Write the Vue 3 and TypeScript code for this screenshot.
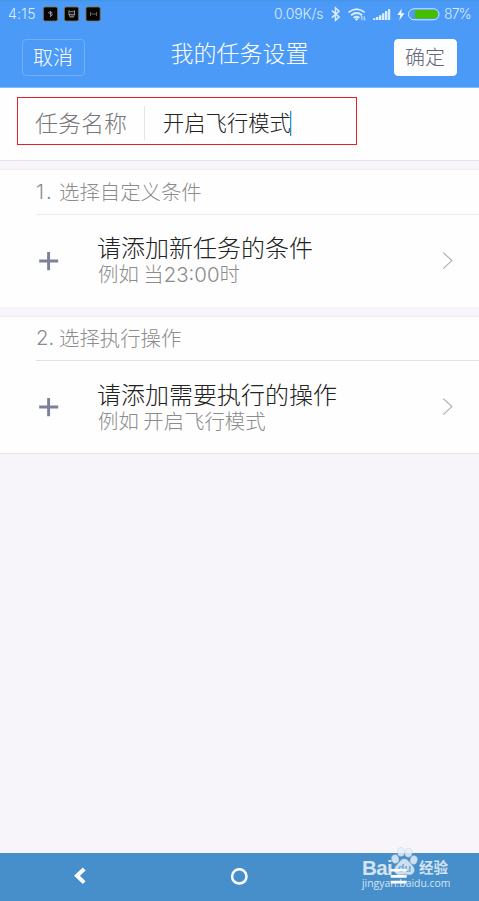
<script setup lang="ts">
interface Section {
  heading: string
  title: string
  before: string
  example: string
  after: string
}

const taskName = '开启飞行模式'
const sections: Section[] = [
  { heading: '选择自定义条件', title: '请添加新任务的条件', before: '例如 当', example: '23:00', after: '时' },
  { heading: '选择执行操作', title: '请添加需要执行的操作', before: '例如 开启飞行模式', example: '', after: '' },
]
</script>

<template>
  <div class="screen">
    <header class="top">
      <div class="status">
        <span class="clock">4:15</span>
        <svg class="apps" width="60" height="16" viewBox="0 0 60 16">
          <g fill="#050505" stroke="#8a7440" stroke-width="0.8">
            <rect x="1.4" y="1" width="14.2" height="14" rx="1.8" />
            <rect x="22.4" y="1" width="14.2" height="14" rx="1.8" />
            <rect x="44" y="1" width="14.2" height="14" rx="1.8" />
          </g>
          <g fill="none" stroke="#aaa" stroke-width="0.8">
            <path d="M8.5 5v6M6 6.5l4.5 2-2 2M7.5 5.5l3 1.5" />
            <path d="M27 4.5l1 1.2h3.5l1-1.2v3.5l-1 3h-3.5l-1-3zM26.5 8.3h6.5M28.5 10h2.5" />
            <path d="M48.5 6v4M48.5 8h6M54.5 6v4" stroke="#777" />
          </g>
        </svg>
        <span class="speed">0.09K/s</span>
        <svg class="signals" width="112" height="18" viewBox="0 0 112 18">
          <path d="M3.9 5.6l7.2 6.4-3.6 3.3V3l3.6 3.2-7.2 6.4" fill="none" stroke="#dcecff" stroke-width="1.5" />
          <g fill="none" stroke="#dcecff" stroke-width="1.8">
            <path d="M20.5 7.4q8-6.6 16.2 0M23.1 10.2q5.6-4.5 11 0M25.7 12.9q2.9-2.3 5.8 0" />
          </g>
          <circle cx="28.6" cy="14.2" r="1.3" fill="#dcecff" />
          <path d="M33.9 15.2v-4l-1.2 1.2M36.2 11.2v4l1.2-1.2" fill="none" stroke="#dcecff" stroke-width="0.9" />
          <path d="M45 13.3h2.4v1.7h-2.4zM48 12h2.4v3h-2.4zM51 10.2h2.4v4.8h-2.4zM54 8.2h2.4v6.8h-2.4zM57 6h2.4v9h-2.4zM60 4h2.2v11h-2.2z" fill="#dcecff" />
          <path d="M73.8 3.5L69.3 10h3l-1.1 5.5 5.3-7.2h-3.2z" fill="#f0f7ff" />
          <rect x="80.5" y="3.8" width="30.5" height="11" rx="5.5" fill="none" stroke="#d5e7ff" />
          <path d="M87 5.1h19q4 .4 4 4.2t-4 4.2H87z" fill="#43bf00" />
        </svg>
        <span class="percent">87%</span>
      </div>
      <div class="bar">
        <button class="btn cancel" type="button">取消</button>
        <h1 class="page-title">我的任务设置</h1>
        <button class="btn confirm" type="button">确定</button>
      </div>
    </header>

    <section class="name-row">
      <div class="name-box">
        <span class="name-label">任务名称</span>
        <span class="name-value">{{ taskName }}</span>
        <i class="caret"></i>
      </div>
    </section>

    <section v-for="(item, i) in sections" :key="item.heading" class="card">
      <h2 class="card-heading"><span class="num">{{ i + 1 }}.</span>{{ item.heading }}</h2>
      <div class="card-body">
        <svg class="plus" width="20" height="20" viewBox="0 0 20 20">
          <path d="M.2 10h19M9.6 1v18.2" stroke="#7c8099" stroke-width="2.9" />
        </svg>
        <div class="copy">
          <p class="title">{{ item.title }}</p>
          <p class="hint">{{ item.before }}<span v-if="item.example" class="digits">{{ item.example }}</span>{{ item.after }}</p>
        </div>
        <svg class="chevron" width="11" height="18" viewBox="0 0 11 18">
          <path d="M1.3 .6l8.5 8-8.5 8" fill="none" stroke="#aaa" stroke-width="1.1" />
        </svg>
      </div>
    </section>

    <footer class="nav">
      <svg class="back" width="16" height="20" viewBox="0 0 16 20">
        <path d="M12.2 3L5 9.8l7.2 6.8" fill="none" stroke="#fff" stroke-width="4" />
      </svg>
      <svg class="home" width="18" height="18" viewBox="0 0 18 18">
        <circle cx="9.3" cy="8.4" r="7.2" fill="none" stroke="#fff" stroke-width="2.5" />
      </svg>
      <svg class="menu" width="17" height="16" viewBox="0 0 17 16">
        <path d="M.7 1.2h16M.7 7.4h16M.7 13.2h16" stroke="#fff" stroke-width="2.8" />
      </svg>
      <div class="watermark">
        <div class="brand">
          <span class="bai">Bai</span>
          <svg class="paw" width="27" height="29" viewBox="0 0 27 29">
            <g fill="#e6eff7" fill-opacity="0.85" stroke="#c9d5e2" stroke-width="0.5">
              <ellipse cx="4.2" cy="12" rx="3.4" ry="4.2" transform="rotate(-12 4.2 12)" />
              <ellipse cx="10" cy="4.9" rx="3.4" ry="4.4" />
              <ellipse cx="17.6" cy="5.6" rx="3.4" ry="4.5" transform="rotate(12 17.6 5.6)" />
              <ellipse cx="22.8" cy="13" rx="3.4" ry="4.2" transform="rotate(14 22.8 13)" />
              <path d="M13.3 12c3.5 0 4.6 3.3 7.6 6.2 4.4 4.5 2 9.9-3.2 9.4-3-.4-5.3-.4-8.4 0-5.6.6-7.6-5.4-3.8-9.1 3.1-3 4.4-6.5 7.8-6.5z" />
            </g>
            <text x="6.8" y="24.5" font-size="11" font-weight="700" font-family="Liberation Sans, sans-serif" fill="#478fcb" fill-opacity="0.7">du</text>
          </svg>
          <span class="jy">经验</span>
        </div>
        <div class="site">jingyan.baidu.com</div>
      </div>
    </footer>
  </div>
</template>

<style>
body {
  margin: 0;
}
</style>

<style scoped>
.screen {
  width: 479px;
  height: 901px;
  display: flex;
  flex-direction: column;
  overflow: hidden;
  background: #f7f5f9;
  font-family: "Noto Sans CJK SC", sans-serif;
  font-weight: 300;
}
h1, h2, p {
  margin: 0;
  font-weight: 300;
}
svg {
  display: block;
  flex: none;
}
.top {
  box-sizing: border-box;
  height: 88px;
  flex: none;
  background: linear-gradient(#4594e9 0, #4b9af7 3px);
  border-bottom: 1px solid #82baff;
}
.status {
  height: 28px;
  display: flex;
  align-items: center;
  padding-left: 8px;
  font: 300 14px/28px Inter, sans-serif;
  color: #dcecff;
  white-space: nowrap;
}
.clock {
  width: 34px;
  letter-spacing: 0.3px;
}
.speed {
  margin-left: 172px;
  width: 54px;
  letter-spacing: -0.1px;
}
.percent {
  margin-left: 4px;
  letter-spacing: -0.9px;
}
.bar {
  display: flex;
  align-items: flex-start;
  justify-content: space-between;
  padding: 11px 22px 0;
}
.btn {
  box-sizing: border-box;
  width: 63px;
  height: 37px;
  padding: 0 1px 2px 0;
  border: 1px solid #72b0fa;
  border-radius: 4px;
  background: transparent;
  color: #fff;
  font: 300 20px/32px "Noto Sans CJK SC", sans-serif;
}
.confirm {
  border-color: #fff;
  background: #fff;
  color: #66677c;
}
.page-title {
  font-size: 23px;
  line-height: 26px;
  color: #fff;
}
.name-row {
  box-sizing: border-box;
  height: 73px;
  flex: none;
  padding: 9px 17px;
  background: #fefefe;
  border-bottom: 1px solid #e3e3e5;
}
.name-box {
  box-sizing: border-box;
  width: 340px;
  height: 48px;
  display: flex;
  align-items: center;
  padding-left: 17px;
  border: 1px solid #e5202a;
}
.name-label {
  box-sizing: border-box;
  width: 110px;
  height: 34px;
  margin-top: 4px;
  border-right: 1px solid #e4e4e4;
  font-size: 23px;
  line-height: 32px;
  color: #777;
}
.name-value {
  margin-left: 18px;
  font-size: 21.3px;
  line-height: 34px;
  margin-top: 2px;
  color: #222;
}
.caret {
  width: 1px;
  height: 25px;
  margin-top: 5px;
  margin-left: -1px;
  background: #2c8fc4;
  box-shadow: 1px 0 #b5e2f5;
}
.card {
  box-sizing: border-box;
  height: 138px;
  flex: none;
  margin-top: 8px;
  background: #fefefe;
  border-top: 1px solid #efeef1;
}
.card + .card {
  margin-top: 9px;
  border-bottom: 1px solid #e5e4e8;
}
.card-heading {
  box-sizing: border-box;
  height: 45px;
  margin-left: 36px;
  border-bottom: 1px solid #ececee;
  display: flex;
  font-size: 20.4px;
  line-height: 43px;
  color: #8c8c8c;
}
.card + .card .card-heading {
  height: 44px;
  line-height: 41px;
  border-bottom-color: #e2e2e5;
}
.num {
  width: 23px;
  font-family: Inter, sans-serif;
}
.card:not(.card + .card) .num {
  letter-spacing: 2px;
}
.card-body {
  height: 92px;
  display: flex;
  align-items: center;
  padding: 0 26px 0 39px;
}
.copy {
  flex: 1;
  margin-left: 38px;
}
.title {
  font-size: 24px;
  line-height: 26px;
  color: #222;
}
.hint {
  padding-left: 1px;
  font-size: 20.4px;
  line-height: 26px;
  color: #8c8c8c;
}
.digits {
  font-family: Inter, sans-serif;
}
.nav {
  position: relative;
  height: 48px;
  flex: none;
  margin-top: auto;
  display: flex;
  align-items: center;
  background: #478fcb;
}
.back {
  margin-left: 72px;
  margin-bottom: 3px;
}
.home {
  margin-left: 142px;
}
.menu {
  position: relative;
  z-index: 1;
  margin-left: 142px;
}
.watermark {
  position: absolute;
  left: 362px;
  top: -6px;
  color: #d5e4f2;
}
.brand {
  height: 29px;
  display: flex;
  align-items: flex-end;
}
.bai {
  width: 29px;
  font: 700 20.5px/17px "Liberation Sans", sans-serif;
  letter-spacing: -0.6px;
}
.jy {
  margin-left: 1px;
  font-size: 14.5px;
  font-weight: 700;
  line-height: 19px;
}
.site {
  font: 400 10.4px/14px "Open Sans", sans-serif;
}
</style>
